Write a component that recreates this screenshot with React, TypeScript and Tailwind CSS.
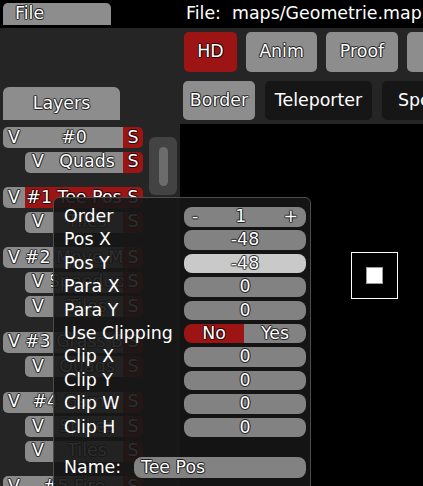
import React from "react";

const outline =
  "[text-shadow:1px_0_0_rgba(0,0,0,0.55),-1px_0_0_rgba(0,0,0,0.55),0_1px_0_rgba(0,0,0,0.55),0_-1px_0_rgba(0,0,0,0.55),1px_1px_0_rgba(0,0,0,0.3),-1px_-1px_0_rgba(0,0,0,0.3),1px_-1px_0_rgba(0,0,0,0.3),-1px_1px_0_rgba(0,0,0,0.3)]";

function GroupRow({ name, active }: { name: string; active?: boolean }) {
  return (
    <div className="flex h-[21px] leading-none">
      <div className={`w-[22px] rounded-l-[5px] bg-[#8a8a8a] flex items-center justify-center ${outline}`}>V</div>
      <div
        className={`w-[98px] flex items-center justify-center overflow-hidden whitespace-nowrap ${outline} ${
          active ? "bg-[#9d1414]" : "bg-[#8a8a8a]"
        }`}
      >
        {name}
      </div>
      <div className={`w-[20px] rounded-r-[5px] bg-[#9d1414] flex items-center justify-center ${outline}`}>S</div>
    </div>
  );
}

function LayerRow({ name }: { name: string }) {
  return (
    <div className="flex h-[21px] ml-[22px] leading-none">
      <div className={`w-[26px] rounded-l-[5px] bg-[#8a8a8a] flex items-center justify-center ${outline}`}>V</div>
      <div className={`w-[72px] bg-[#8a8a8a] flex items-center justify-center overflow-hidden whitespace-nowrap ${outline}`}>
        {name}
      </div>
      <div className={`w-[20px] rounded-r-[5px] bg-[#9d1414] flex items-center justify-center ${outline}`}>S</div>
    </div>
  );
}

const groups: { name: string; active?: boolean; layers: string[] }[] = [
  { name: "#0", layers: ["Quads"] },
  { name: "#1 Tee Pos", active: true, layers: ["Tiles"] },
  { name: "#2 Move M", layers: ["Speedup", "Tiles"] },
  { name: "#3 Grass B", layers: ["Quads"] },
  { name: "#4 Game", layers: ["Spikes", "Tiles"] },
  { name: "#5 Fire", layers: ["Tiles"] },
];

function Field({ value, light }: { value: string; light?: boolean }) {
  return (
    <div
      className={`w-[122px] h-full rounded-[8px] flex items-center justify-center ${outline} ${
        light ? "bg-[#c9c9c9]" : "bg-[#828282]"
      }`}
    >
      {value}
    </div>
  );
}

function PropRow({ label, children }: { label: string; children: React.ReactNode }) {
  return (
    <div className="flex items-center h-[19.5px] leading-none">
      <div className="w-[120px] whitespace-nowrap">{label}</div>
      {children}
    </div>
  );
}

export default function App() {
  return (
    <div className="relative w-[423px] h-[486px] overflow-hidden bg-[#252525] font-['DejaVu_Sans',sans-serif] text-[17.4px] text-white">
      {/* Menu bar */}
      <div className="h-[28px] bg-black flex items-start leading-none">
        <div className={`ml-[3px] mt-[3px] w-[108px] h-[22px] rounded-t-[5px] bg-[#8d8d8d] pl-[12px] flex items-center ${outline}`}>
          File
        </div>
        <div className="ml-[75px] h-[28px] flex items-center whitespace-pre">File:  maps/Geometrie.map</div>
      </div>

      <div className="flex h-[458px]">
        {/* Layers panel */}
        <aside className="w-[180px] shrink-0 pt-[59px] pl-[3px]">
          <div className={`w-[117px] h-[33px] rounded-t-[6px] bg-[#8d8d8d] flex items-center justify-center leading-none ${outline}`}>
            Layers
          </div>
          <div className="flex mt-[7px]">
            <div className="flex flex-col gap-[14.5px] w-[140px]">
              {groups.map((g) => (
                <div key={g.name} className="flex flex-col gap-[3.5px]">
                  <GroupRow name={g.name} active={g.active} />
                  {g.layers.map((l, i) => (
                    <LayerRow key={i} name={l} />
                  ))}
                </div>
              ))}
            </div>
            <div className="ml-[6px] mt-[10px] w-[28px] h-[58px] rounded-[6px] bg-[#434343] flex justify-center pt-[10px]">
              <div className="w-[9px] h-[39px] rounded-full bg-[#6c6c6c]" />
            </div>
          </div>
        </aside>

        {/* Toolbar + canvas */}
        <div className="flex-1 flex flex-col min-w-0">
          <div className="h-[96px] pt-[4px] flex flex-col gap-[9px] overflow-hidden leading-none">
            <div className="flex h-[40px] gap-[9px] pl-[4px]">
              <div className={`shrink-0 w-[53px] rounded-[5px] bg-[#9d1414] flex items-center justify-center ${outline}`}>HD</div>
              <div className={`shrink-0 w-[71px] rounded-[5px] bg-[#8d8d8d] flex items-center justify-center ${outline}`}>Anim</div>
              <div className={`shrink-0 w-[72px] rounded-[5px] bg-[#8d8d8d] flex items-center justify-center ${outline}`}>Proof</div>
              <div className={`shrink-0 w-[72px] rounded-[5px] bg-[#8d8d8d] flex items-center justify-center ${outline}`}>Grid</div>
            </div>
            <div className="flex h-[39px] gap-[10px] pl-[3px]">
              <div className={`shrink-0 w-[72px] rounded-[5px] bg-[#8d8d8d] flex items-center justify-center ${outline}`}>Border</div>
              <div className="shrink-0 w-[107px] rounded-[5px] bg-[#161616] flex items-center justify-center">Teleporter</div>
              <div className="shrink-0 w-[90px] rounded-[5px] bg-[#161616] flex items-center pl-[16px]">Speedup</div>
            </div>
          </div>
          <div className="flex-1 bg-black relative">
            <div className="absolute left-[171px] top-[128px] w-[47px] h-[47px] border-[1.5px] border-white" />
            <div className="absolute left-[186px] top-[143px] w-[17px] h-[17px] bg-white border border-[#9a9a9a]" />
          </div>
        </div>
      </div>

      {/* Group properties popup */}
      <div className="absolute left-[53px] top-[197px] w-[258px] h-[310px] rounded-[6px] border border-[#4c4c4c] bg-[rgba(22,22,22,0.9)] pl-[10px] pt-[9px]">
        <div className="flex flex-col gap-[3.9px]">
          <PropRow label="Order">
            <div className={`w-[122px] h-full rounded-[8px] bg-[#828282] flex items-center justify-between px-[8px] ${outline}`}>
              <span>-</span>
              <span>1</span>
              <span>+</span>
            </div>
          </PropRow>
          <PropRow label="Pos X">
            <Field value="-48" />
          </PropRow>
          <PropRow label="Pos Y">
            <Field value="-48" light />
          </PropRow>
          <PropRow label="Para X">
            <Field value="0" />
          </PropRow>
          <PropRow label="Para Y">
            <Field value="0" />
          </PropRow>
          <PropRow label="Use Clipping">
            <div className="flex w-[122px] h-full">
              <div className={`w-[60px] rounded-l-[8px] bg-[#9d1414] flex items-center justify-center ${outline}`}>No</div>
              <div className={`w-[62px] rounded-r-[8px] bg-[#828282] flex items-center justify-center ${outline}`}>Yes</div>
            </div>
          </PropRow>
          <PropRow label="Clip X">
            <Field value="0" />
          </PropRow>
          <PropRow label="Clip Y">
            <Field value="0" />
          </PropRow>
          <PropRow label="Clip W">
            <Field value="0" />
          </PropRow>
          <PropRow label="Clip H">
            <Field value="0" />
          </PropRow>
        </div>
        <div className="flex items-center h-[21px] mt-[20px] leading-none">
          <div className="w-[70px]">Name:</div>
          <div className={`w-[172px] h-full rounded-[8px] bg-[#828282] flex items-center pl-[7px] ${outline}`}>Tee Pos</div>
        </div>
      </div>
    </div>
  );
}
